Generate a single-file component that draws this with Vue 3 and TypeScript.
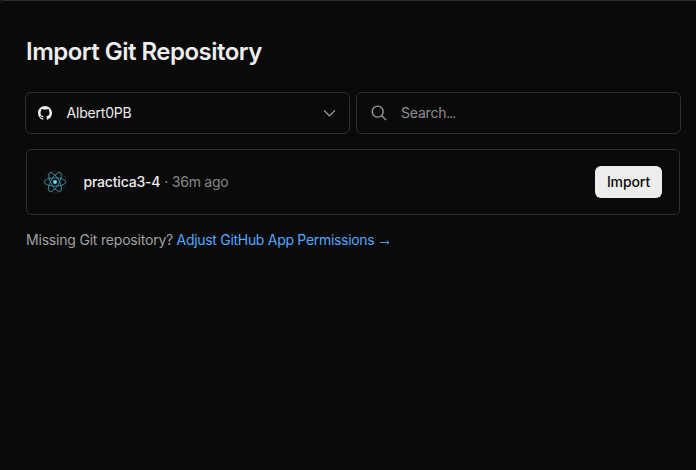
<script setup lang="ts">
interface Repository {
  name: string
  age: string
}

const account: string = 'Albert0PB'
const repositories: Repository[] = [{ name: 'practica3-4', age: '36m ago' }]
const orbits: number[] = [0, 60, 120]
</script>

<template>
  <main class="panel">
    <h1 class="title"><span>Import Git Repository</span></h1>
    <div class="filters">
      <button class="field" type="button">
        <svg class="github" viewBox="0 0 16 16" aria-hidden="true">
          <path fill="currentColor" d="M8 0C3.58 0 0 3.58 0 8c0 3.54 2.29 6.53 5.47 7.59.4.07.55-.17.55-.38 0-.19-.01-.82-.01-1.49-2.01.37-2.53-.49-2.69-.94-.09-.23-.48-.94-.82-1.13-.28-.15-.68-.52-.01-.53.63-.01 1.08.58 1.23.82.72 1.21 1.87.87 2.33.66.07-.52.28-.87.51-1.07-1.78-.2-3.64-.89-3.64-3.95 0-.87.31-1.59.82-2.15-.08-.2-.36-1.02.08-2.12 0 0 .67-.21 2.2.82.64-.18 1.32-.27 2-.27s1.36.09 2 .27c1.53-1.04 2.2-.82 2.2-.82.44 1.1.16 1.92.08 2.12.51.56.82 1.27.82 2.15 0 3.07-1.87 3.75-3.65 3.95.29.25.54.73.54 1.48 0 1.07-.01 1.93-.01 2.2 0 .21.15.46.55.38A8.01 8.01 0 0 0 16 8c0-4.42-3.58-8-8-8z" />
        </svg>
        <span class="account">{{ account }}</span>
        <svg class="chevron" viewBox="0 0 16 16" aria-hidden="true">
          <path d="M2.2 4.7 8 10.5l5.8-5.8" />
        </svg>
      </button>
      <label class="field">
        <svg class="magnifier" viewBox="0 0 16 16" aria-hidden="true">
          <circle cx="6.7" cy="6.7" r="5.5" />
          <path d="m10.7 10.7 4.4 4.4" />
        </svg>
        <span class="placeholder">Search<span class="dots">...</span></span>
      </label>
    </div>
    <section class="repositories">
      <article v-for="repo in repositories" :key="repo.name" class="repository">
        <svg class="react" viewBox="0 0 24 24" aria-hidden="true">
          <circle class="disc" cx="12" cy="12" r="11" />
          <ellipse
            v-for="angle in orbits"
            :key="angle"
            class="orbit"
            cx="12"
            cy="12"
            rx="10.7"
            ry="4.1"
            :transform="`rotate(${angle} 12 12)`"
          />
          <circle class="nucleus" cx="12" cy="12" r="2" />
        </svg>
        <span class="name">{{ repo.name }}</span>
        <span class="dot">·</span>
        <span class="age">{{ repo.age }}</span>
        <button class="import" type="button"><span>Import</span></button>
      </article>
    </section>
    <p class="help">
      <span class="question">Missing Git repository?</span>
      <a class="link"><span>Adjust GitHub App Permissions</span><svg class="arrow" viewBox="0 0 10 5" aria-hidden="true"><path d="M0 2.5h9M6.8.5 9 2.5l-2.2 2" /></svg></a>
    </p>
  </main>
</template>

<style>
body {
  background: #0a0a0a;
}
</style>

<style scoped>
.panel {
  box-sizing: border-box;
  height: 470px;
  padding: 35px 15px 0 25px;
  border-top: 1px solid #2e2e2e;
  border-top-left-radius: 3px;
  background: #0a0a0a;
  color: #ededed;
  font: 14px/20px Inter, "Liberation Sans", sans-serif;
}
.title {
  margin: 0 0 24px 1px;
  font-size: 24px;
  line-height: 32px;
  font-weight: 600;
  letter-spacing: -0.51px;
}
.filters {
  display: flex;
  gap: 6px;
}
.field {
  box-sizing: border-box;
  flex: 1;
  display: flex;
  align-items: center;
  height: 42px;
  padding: 0 12px;
  border: 1px solid #2e2e2e;
  border-radius: 6px;
  background: #0a0a0a;
  color: #ededed;
  font: inherit;
}
.github {
  width: 14px;
  height: 14px;
  margin-right: 14.5px;
}
.account {
  letter-spacing: -0.2px;
}
.chevron {
  width: 15px;
  height: 15px;
  margin-left: auto;
}
.chevron,
.magnifier {
  fill: none;
  stroke: #a1a1a1;
  stroke-width: 1.4;
}
.magnifier {
  width: 16px;
  height: 16px;
  margin: 0 14px 0 2px;
  stroke-width: 1.3;
}
.placeholder {
  color: #8f8f8f;
  letter-spacing: -0.2px;
}
.dots {
  letter-spacing: -1px;
}
.repositories {
  margin: 15px 1px 0;
  border: 1px solid #2e2e2e;
  border-radius: 5px;
}
.repository {
  display: flex;
  align-items: center;
  height: 64px;
  padding: 0 17px 0 16px;
}
.react {
  width: 24px;
  height: 24px;
  margin-right: 16.5px;
}
.disc {
  fill: #0c0c0c;
  stroke: #202020;
  stroke-width: 0.8;
}
.orbit {
  fill: none;
  stroke: #409bb0;
  stroke-width: 0.8;
}
.nucleus {
  fill: #61dafb;
}
.name {
  font-weight: 500;
  letter-spacing: -0.2px;
}
.dot {
  margin: 0 3.5px 0 4px;
  color: #a1a1a1;
}
.age {
  color: #878787;
  letter-spacing: -0.25px;
}
.import {
  width: 67px;
  height: 32px;
  margin-left: auto;
  padding: 0;
  border: 0;
  border-radius: 6px;
  background: #ededed;
  color: #0a0a0a;
  font: inherit;
  font-weight: 500;
  letter-spacing: -0.1px;
}
.help {
  display: flex;
  gap: 3.5px;
  margin: 15px 0 0 1px;
  color: #a1a1a1;
}
.question {
  letter-spacing: -0.2px;
}
.link {
  display: flex;
  align-items: center;
  color: #52a8ff;
  letter-spacing: -0.3px;
}
.arrow {
  width: 10px;
  height: 5px;
  margin: 4px 0 0 6px;
  fill: none;
  stroke: currentColor;
  stroke-width: 0.9;
}
</style>
